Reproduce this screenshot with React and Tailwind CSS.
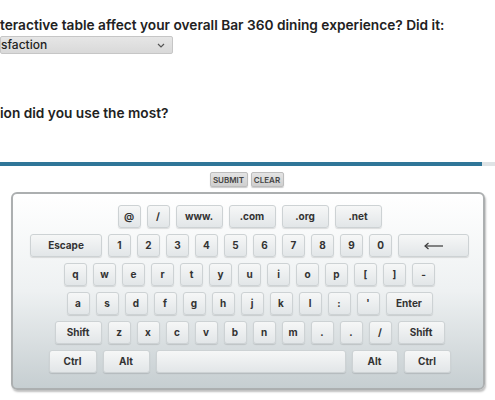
import React from 'react';

const rows = [
    [
        { k: '@' }, { k: '/' }, { k: 'www.', w: 'w-[47px]' }, { k: '.com', w: 'w-[47px]' }, { k: '.org', w: 'w-[47px]' }, { k: '.net', w: 'w-[47px]' }
    ],
    [
        { k: 'Escape', w: 'w-[72px]' },
        ...'1234567890'.split('').map(k => ({ k })),
        { k: 'back', w: 'w-[71px]' }
    ],
    'qwertyuiop[]-'.split('').map(k => ({ k })),
    [...'asdfghjkl:\''.split('').map(k => ({ k })), { k: 'Enter', w: 'w-[47px]' }],
    [
        { k: 'Shift', w: 'w-[47px]' },
        ...'zxcvbnm../'.split('').map(k => ({ k })),
        { k: 'Shift', w: 'w-[47px]' }
    ],
    [
        { k: 'Ctrl', w: 'w-[48px]' }, { k: 'Alt', w: 'w-[47px]' }, { k: '', w: 'w-[190px]' }, { k: 'Alt', w: 'w-[46px]' }, { k: 'Ctrl', w: 'w-[47px]' }
    ]
];

const BackArrow = () => (
    <svg width="20" height="8" viewBox="0 0 20 8" fill="none" stroke="#3a3a3a" strokeWidth="1.2">
        <path d="M1 4 H19" />
        <path d="M4.5 1 L1 4 L4.5 7" />
    </svg>
);

const Key = ({ k, w }) => (
    <div className={`${w || 'w-[23px]'} h-[23px] rounded-[3px] border border-[#cdd2d4] bg-gradient-to-b from-[#f6f7f7] to-[#e2e6e8] shadow-[0_1px_1px_rgba(0,0,0,0.12)] flex items-center justify-center text-[10px] font-bold text-[#333]`}>
        {k === 'back' ? <BackArrow /> : k}
    </div>
);

const App = () => {
    return (
        <div className="w-[495px] h-[400px] overflow-hidden bg-white" style={{ fontFamily: 'Inter, "Noto Sans", sans-serif' }}>
            {/* question 1 */}
            <div className="pt-[16px]">
                <p className="whitespace-nowrap text-[13.7px] leading-[18px] font-semibold text-[#222]">
                    teractive table affect your overall Bar 360 dining experience? Did it:
                </p>
                <div className="mt-[2px] w-[173px] h-[18px] flex items-center justify-between border border-[#c6c6c6] rounded-[2px] bg-gradient-to-b from-[#e6e6e6] to-[#d9d9d9]">
                    <span className="text-[12px] font-medium text-[#222]">sfaction</span>
                    <svg width="8" height="5" viewBox="0 0 8 5" fill="none" stroke="#555" strokeWidth="1.2" className="mr-[7px]">
                        <path d="M1 1 L4 4 L7 1" />
                    </svg>
                </div>
            </div>

            {/* question 2 */}
            <p className="mt-[50px] whitespace-nowrap text-[13.7px] leading-[18px] font-semibold text-[#222]">
                ion did you use the most?
            </p>

            {/* progress */}
            <div className="mt-[40px] flex h-[4px]">
                <div className="w-[482px] bg-[#2f7698]" />
                <div className="flex-1 bg-[#dfe3e5]" />
            </div>

            {/* buttons */}
            <div className="mt-[6px] flex justify-center gap-[3px] pr-[2px]">
                <button className="w-[38px] h-[15px] rounded-[2px] border border-[#bdbdbd] bg-gradient-to-b from-[#e4e4e4] to-[#cfcfcf] shadow-[0_1px_1px_rgba(0,0,0,0.2)] text-[8px] font-semibold text-[#444] flex items-center justify-center">SUBMIT</button>
                <button className="w-[33px] h-[15px] rounded-[2px] border border-[#bdbdbd] bg-gradient-to-b from-[#e4e4e4] to-[#cfcfcf] shadow-[0_1px_1px_rgba(0,0,0,0.2)] text-[8px] font-semibold text-[#444] flex items-center justify-center">CLEAR</button>
            </div>

            {/* keyboard */}
            <div className="mt-[5px] ml-[11px] w-[474px] h-[198px] rounded-[6px] border-2 border-[#acafb0] bg-gradient-to-b from-white via-[#eef1f2] to-[#c6ced1] shadow-[1px_2px_2px_rgba(0,0,0,0.25)] pt-[11px] pl-[3px] flex flex-col gap-[6px]">
                {rows.map((row, i) => (
                    <div key={i} className="flex justify-center gap-[6px]">
                        {row.map((key, j) => <Key key={j} k={key.k} w={key.w} />)}
                    </div>
                ))}
            </div>
        </div>
    );
};

export default App;
